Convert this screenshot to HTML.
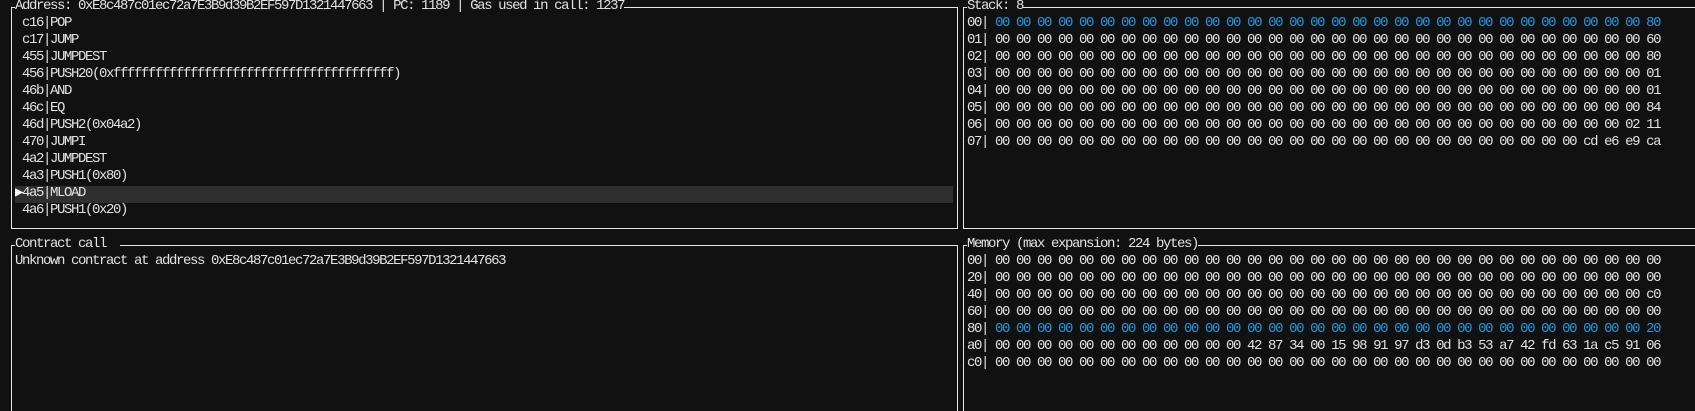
<!DOCTYPE html>
<html><head><meta charset="utf-8"><style>
html,body{margin:0;padding:0;background:#111111;width:1695px;height:411px;overflow:hidden;}
body{position:relative;font-family:"Liberation Mono",monospace;font-size:14px;letter-spacing:-1.4px;color:#e2e2e2;}
.box{position:absolute;border:1px solid #e6e6e6;box-sizing:border-box;}
.t{position:absolute;white-space:pre;line-height:17px;height:17px;}
.tt{background:#111111;}
.b{color:#1e9ae0;}
.hl{position:absolute;left:15px;width:938px;top:186px;height:17px;background:#2f2f2f;}
</style></head><body>
<div class="box" style="left:11px;top:7px;width:947px;height:222px;"></div>
<div class="box" style="left:963px;top:7px;width:732px;height:222px;border-right:none;"></div>
<div class="box" style="left:11px;top:245px;width:947px;height:166px;border-bottom:none;"></div>
<div class="box" style="left:963px;top:245px;width:732px;height:166px;border-bottom:none;border-right:none;"></div>
<div class="hl"></div>

<div class="t tt" style="left:15px;top:-2px;">Address: 0xE8c487c01ec72a7E3B9d39B2EF597D1321447663 | PC: 1189 | Gas used in call: 1237</div>
<div class="t" style="left:22px;top:15px;">c16|POP</div>
<div class="t" style="left:22px;top:32px;">c17|JUMP</div>
<div class="t" style="left:22px;top:49px;">455|JUMPDEST</div>
<div class="t" style="left:22px;top:66px;">456|PUSH20(0xffffffffffffffffffffffffffffffffffffffff)</div>
<div class="t" style="left:22px;top:83px;">46b|AND</div>
<div class="t" style="left:22px;top:100px;">46c|EQ</div>
<div class="t" style="left:22px;top:117px;">46d|PUSH2(0x04a2)</div>
<div class="t" style="left:22px;top:134px;">470|JUMPI</div>
<div class="t" style="left:22px;top:151px;">4a2|JUMPDEST</div>
<div class="t" style="left:22px;top:168px;">4a3|PUSH1(0x80)</div>
<div class="t" style="left:15px;top:185px;color:#fff;">▶</div>
<div class="t" style="left:22px;top:185px;">4a5|MLOAD</div>
<div class="t" style="left:22px;top:202px;">4a6|PUSH1(0x20)</div>

<div class="t tt" style="left:15px;top:236px;">Contract call  </div>
<div class="t" style="left:15px;top:253px;">Unknown contract at address 0xE8c487c01ec72a7E3B9d39B2EF597D1321447663</div>

<div class="t tt" style="left:967px;top:-2px;">Stack: 8</div>
<div class="t" style="left:967px;top:15px;">00| <span class="b">00 00 00 00 00 00 00 00 00 00 00 00 00 00 00 00 00 00 00 00 00 00 00 00 00 00 00 00 00 00 00 80</span></div>
<div class="t" style="left:967px;top:32px;">01| 00 00 00 00 00 00 00 00 00 00 00 00 00 00 00 00 00 00 00 00 00 00 00 00 00 00 00 00 00 00 00 60</div>
<div class="t" style="left:967px;top:49px;">02| 00 00 00 00 00 00 00 00 00 00 00 00 00 00 00 00 00 00 00 00 00 00 00 00 00 00 00 00 00 00 00 80</div>
<div class="t" style="left:967px;top:66px;">03| 00 00 00 00 00 00 00 00 00 00 00 00 00 00 00 00 00 00 00 00 00 00 00 00 00 00 00 00 00 00 00 01</div>
<div class="t" style="left:967px;top:83px;">04| 00 00 00 00 00 00 00 00 00 00 00 00 00 00 00 00 00 00 00 00 00 00 00 00 00 00 00 00 00 00 00 01</div>
<div class="t" style="left:967px;top:100px;">05| 00 00 00 00 00 00 00 00 00 00 00 00 00 00 00 00 00 00 00 00 00 00 00 00 00 00 00 00 00 00 00 84</div>
<div class="t" style="left:967px;top:117px;">06| 00 00 00 00 00 00 00 00 00 00 00 00 00 00 00 00 00 00 00 00 00 00 00 00 00 00 00 00 00 00 02 11</div>
<div class="t" style="left:967px;top:134px;">07| 00 00 00 00 00 00 00 00 00 00 00 00 00 00 00 00 00 00 00 00 00 00 00 00 00 00 00 00 cd e6 e9 ca</div>

<div class="t tt" style="left:967px;top:236px;">Memory (max expansion: 224 bytes)</div>
<div class="t" style="left:967px;top:253px;">00| 00 00 00 00 00 00 00 00 00 00 00 00 00 00 00 00 00 00 00 00 00 00 00 00 00 00 00 00 00 00 00 00</div>
<div class="t" style="left:967px;top:270px;">20| 00 00 00 00 00 00 00 00 00 00 00 00 00 00 00 00 00 00 00 00 00 00 00 00 00 00 00 00 00 00 00 00</div>
<div class="t" style="left:967px;top:287px;">40| 00 00 00 00 00 00 00 00 00 00 00 00 00 00 00 00 00 00 00 00 00 00 00 00 00 00 00 00 00 00 00 c0</div>
<div class="t" style="left:967px;top:304px;">60| 00 00 00 00 00 00 00 00 00 00 00 00 00 00 00 00 00 00 00 00 00 00 00 00 00 00 00 00 00 00 00 00</div>
<div class="t" style="left:967px;top:321px;">80| <span class="b">00 00 00 00 00 00 00 00 00 00 00 00 00 00 00 00 00 00 00 00 00 00 00 00 00 00 00 00 00 00 00 20</span></div>
<div class="t" style="left:967px;top:338px;">a0| 00 00 00 00 00 00 00 00 00 00 00 00 42 87 34 00 15 98 91 97 d3 0d b3 53 a7 42 fd 63 1a c5 91 06</div>
<div class="t" style="left:967px;top:355px;">c0| 00 00 00 00 00 00 00 00 00 00 00 00 00 00 00 00 00 00 00 00 00 00 00 00 00 00 00 00 00 00 00 00</div>
</body></html>
